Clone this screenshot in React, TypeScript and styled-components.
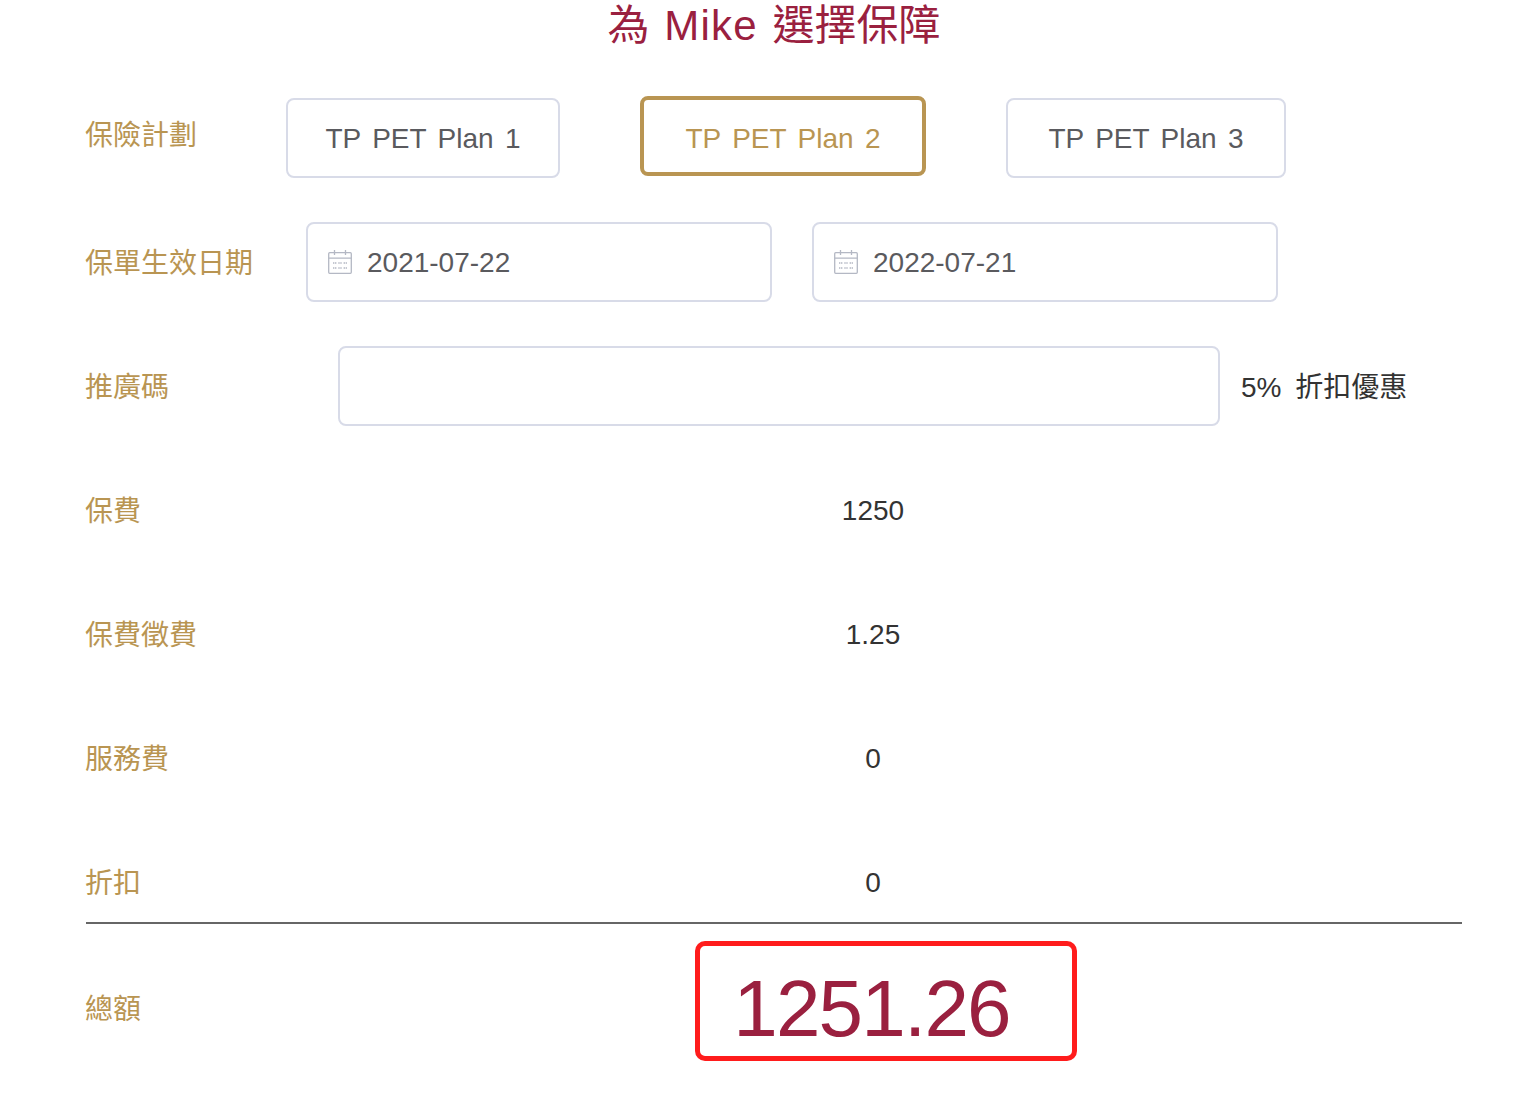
import React from "react";
import styled, { createGlobalStyle } from "styled-components";

const GOLD = "#b99552";
const WINE = "#9a203f";
const LINE = "#d8dbe8";
const FONT = '"Liberation Sans", "Noto Sans CJK TC", sans-serif';

const GlobalStyle = createGlobalStyle`
    html, body {
        margin: 0;
        padding: 0;
        background: #fff;
        font-family: ${FONT};
    }
`;

const CalendarIcon = () => (
    <CalendarSvg viewBox="0 0 24 24" fill="none" stroke="#b4b8c4" strokeWidth="1.3">
        <rect x="0.7" y="2.7" width="22.6" height="20.6" rx="1" />
        <path d="M0.7 8.2h22.6M6.5 0v5M17.5 0v5" />
        <path d="M5 13h3.4M10.3 13h3.4M15.6 13h3.4M5 18h3.4M10.3 18h3.4M15.6 18h3.4" strokeDasharray="1.4 .6" />
    </CalendarSvg>
);

const plans = [
    { name: "TP PET Plan 1", width: 274 },
    { name: "TP PET Plan 2", width: 286 },
    { name: "TP PET Plan 3", width: 280 },
];
const fees = [
    { label: "保費", value: "1250" },
    { label: "保費徵費", value: "1.25" },
    { label: "服務費", value: "0" },
    { label: "折扣", value: "0" },
];

const App = () => (
    <Page>
        <GlobalStyle />
        <Title>為 <TitleName>Mike</TitleName> 選擇保障</Title>
        <PlanRow>
            <Label $width="200px">保險計劃</Label>
            <Plans>
                {plans.map((plan, i) => (
                    <PlanButton key={plan.name} $active={i === 1} $width={plan.width}>{plan.name}</PlanButton>
                ))}
            </Plans>
        </PlanRow>
        <Row>
            <Label $width="220px">保單生效日期</Label>
            <DateField><CalendarIcon /><DateText>2021-07-22</DateText></DateField>
            <DateField><CalendarIcon /><DateText>2022-07-21</DateText></DateField>
        </Row>
        <Row>
            <Label $width="252px">推廣碼</Label>
            <PromoInput />
            <PromoNote>5% 折扣優惠</PromoNote>
        </Row>
        {fees.map((fee) => (
            <Row key={fee.label}>
                <Label $width="200px">{fee.label}</Label>
                <Value>{fee.value}</Value>
            </Row>
        ))}
        <Divider />
        <TotalRow>
            <Label $width="200px">總額</Label>
            <Value>
                <Total>
                    1251.26
                    <Highlight />
                </Total>
            </Value>
        </TotalRow>
    </Page>
);

const Page = styled.div`
    width: 1376px;
    padding: 0 64px 0 86px;
    color: #333;
    font-size: 28px;
`;

const Title = styled.h1`
    margin: 0 0 43px;
    padding-top: 1px;
    height: 50px;
    font-size: 42px;
    line-height: 50px;
    font-weight: 400;
    text-align: center;
    color: ${WINE};
    word-spacing: 3px;
`;

const TitleName = styled.span`
    letter-spacing: 1.2px;
`;

const Row = styled.div`
    display: flex;
    align-items: center;
    height: 80px;
    margin-bottom: 44px;
`;

const PlanRow = styled(Row)`
    align-items: flex-start;
    height: 84px;
`;

const Label = styled.div<{ $width: string }>`
    flex: 0 0 ${({ $width }) => $width};
    box-sizing: border-box;
    height: 80px;
    padding-top: 4px;
    line-height: 76px;
    text-indent: -1px;
    color: ${GOLD};
`;

const Plans = styled.div`
    display: flex;
    gap: 80px;
`;

const PlanButton = styled.div<{ $active?: boolean; $width: number }>`
    box-sizing: border-box;
    width: ${({ $width }) => $width}px;
    height: 80px;
    margin-top: ${({ $active }) => ($active ? "2px" : "4px")};
    padding-top: ${({ $active }) => ($active ? "5px" : "2px")};
    display: flex;
    align-items: center;
    justify-content: center;
    border: ${({ $active }) => ($active ? `4px solid ${GOLD}` : `2px solid ${LINE}`)};
    border-radius: 8px;
    color: ${({ $active }) => ($active ? GOLD : "#5a5a5e")};
    word-spacing: 3.6px;
    white-space: nowrap;
`;

const DateField = styled.div`
    box-sizing: border-box;
    width: 466px;
    height: 80px;
    margin-right: 40px;
    padding-left: 20px;
    display: flex;
    align-items: center;
    gap: 15px;
    border: 2px solid ${LINE};
    border-radius: 8px;
    color: #5a5a5e;
`;

const DateText = styled.span`
    padding-top: 2px;
`;

const CalendarSvg = styled.svg`
    width: 24px;
    height: 24px;
    flex: none;
`;

const PromoInput = styled.div`
    box-sizing: border-box;
    width: 882px;
    height: 80px;
    border: 2px solid ${LINE};
    border-radius: 8px;
`;

const PromoNote = styled.div`
    margin-left: 21px;
    padding-bottom: 2px;
    white-space: nowrap;
    word-spacing: 6px;
`;

const Value = styled.div`
    flex: 1;
    padding: 2px 2px 0 0;
    text-align: center;
`;

const Divider = styled.div`
    height: 2px;
    margin-top: -44px;
    background: #666;
`;

const TotalRow = styled(Row)`
    height: 124px;
    margin: 22px 0 0;
`;

const Total = styled.span`
    position: relative;
    display: inline-block;
    margin-left: -3px;
    font-size: 80px;
    line-height: 92px;
    letter-spacing: -1.8px;
    color: ${WINE};
`;

const Highlight = styled.div`
    position: absolute;
    left: -38px;
    top: -22px;
    width: 382px;
    height: 120px;
    box-sizing: border-box;
    border: 5px solid #ff1c1c;
    border-radius: 10px;
`;

export default App;
